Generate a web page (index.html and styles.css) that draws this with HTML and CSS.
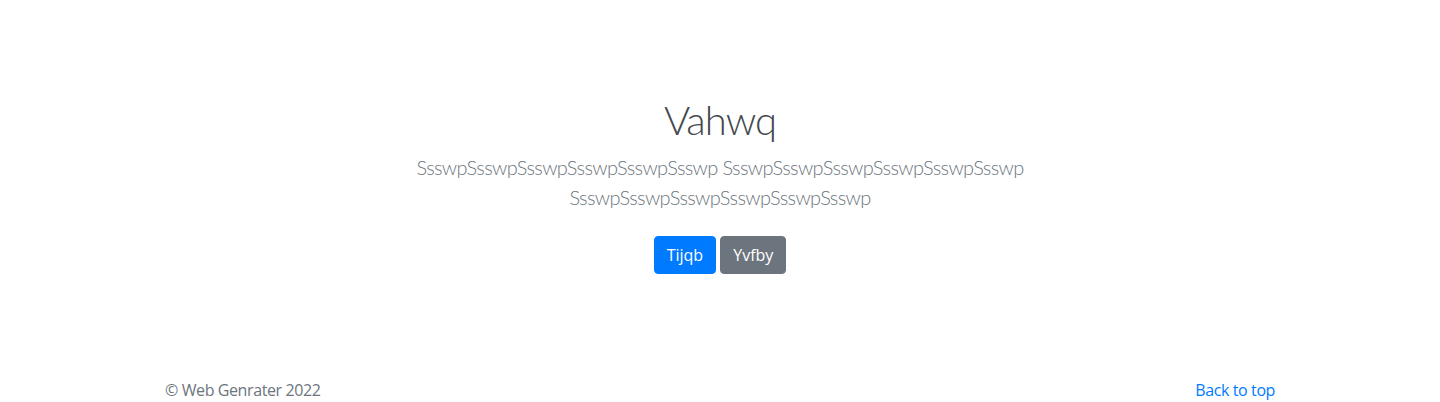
FILE: index.html
```html
<!DOCTYPE html>
<html lang="en">
<head>
<meta charset="utf-8">
<title>Album</title>
<link rel="stylesheet" href="styles.css">
</head>
<body>
<main class="main">
  <section class="jumbotron">
    <div class="jumbo-inner">
      <h1 class="jumbo-heading">Vahwq</h1>
      <p class="lead">SsswpSsswpSsswpSsswpSsswpSsswp SsswpSsswpSsswpSsswpSsswpSsswp SsswpSsswpSsswpSsswpSsswpSsswp</p>
      <p class="actions">
        <a href="#" class="btn btn-primary">Tijqb</a>
        <a href="#" class="btn btn-secondary">Yvfby</a>
      </p>
    </div>
  </section>
</main>
<footer class="footer">
  <div class="container footer-row">
    <p class="footer-text">© Web Genrater 2022</p>
    <p class="footer-text"><a href="#" class="link">Back to top</a></p>
  </div>
</footer>
</body>
</html>
```
FILE: styles.css
```css
* { box-sizing: border-box; }
html, body { margin: 0; padding: 0; }
body {
  font-family: "Open Sans", "Noto Sans", "Liberation Sans", sans-serif;
  font-size: 16px;
  line-height: 1.5;
  color: #212529;
  background: #fff;
}
.main { padding-top: 48px; }
.jumbotron {
  padding: 48px 0;
  text-align: center;
}
.jumbo-inner {
  max-width: 640px;
  margin: 0 auto;
  padding: 0 15px;
}
.jumbo-heading {
  font-family: Lato, "Open Sans", sans-serif;
  font-size: 40px;
  font-weight: 300;
  line-height: 1.2;
  letter-spacing: -1px;
  margin: 0 0 8px;
  color: #44494e;
}
.lead {
  font-family: Lato, "Open Sans", sans-serif;
  font-size: 20px;
  font-weight: 300;
  letter-spacing: -0.65px;
  color: #6c757d;
  margin: 0 0 16px;
  line-height: 1.5;
}
.actions { margin: 0; }
.btn {
  display: inline-block;
  margin: 8px 0;
  padding: 6px 12px;
  font-size: 16px;
  line-height: 24px;
  border-radius: 4px;
  color: #fff;
  text-decoration: none;
  border: 1px solid transparent;
}
.btn-primary { background: #007bff; border-color: #007bff; }
.btn-secondary { background: #6c757d; border-color: #6c757d; }
.footer {
  padding: 48px 0;
  color: #6c757d;
}
.container {
  max-width: 1140px;
  margin: 0 auto;
  padding: 0 15px;
}
.footer-row {
  display: flex;
  justify-content: space-between;
}
.footer-text { margin: 0 0 4px; letter-spacing: -0.4px; }
.link { color: #007bff; text-decoration: none; }
```
